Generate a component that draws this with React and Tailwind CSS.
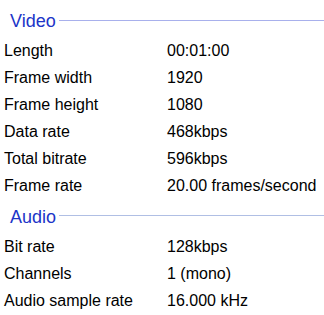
const video = [
  ["Length", "00:01:00"],
  ["Frame width", "1920"],
  ["Frame height", "1080"],
  ["Data rate", "468kbps"],
  ["Total bitrate", "596kbps"],
  ["Frame rate", "20.00 frames/second"],
];

const audio = [
  ["Bit rate", "128kbps"],
  ["Channels", "1 (mono)"],
  ["Audio sample rate", "16.000 kHz"],
];

function Header({ title, lineClass, lineTop, className }) {
  return (
    <div className={`flex items-start h-[31px] ${className}`}>
      <span className="pl-[10px] pr-[3px] text-[18px] leading-[31px] text-[#2035c8]">
        {title}
      </span>
      <div className={`flex-1 h-px ${lineTop} ${lineClass}`} />
    </div>
  );
}

function Rows({ items }) {
  return (
    <div className="flex flex-col">
      {items.map(([label, value]) => (
        <div key={label} className="flex h-[27px] text-[16px] leading-[27px] text-black">
          <span className="w-[167px] pl-[4px]">{label}</span>
          <span>{value}</span>
        </div>
      ))}
    </div>
  );
}

export default function App() {
  return (
    <div
      className="w-[324px] h-[315px] bg-white overflow-hidden"
      style={{ fontFamily: '"Liberation Sans", Arial, sans-serif' }}
    >
      <Header title="Video" lineTop="mt-[14px]" lineClass="bg-[#a8b0ec]" className="mt-[6px]" />
      <Rows items={video} />
      <Header title="Audio" lineTop="mt-[13px]" lineClass="bg-[#b0bfe4]" className="mt-[3px]" />
      <Rows items={audio} />
    </div>
  );
}
